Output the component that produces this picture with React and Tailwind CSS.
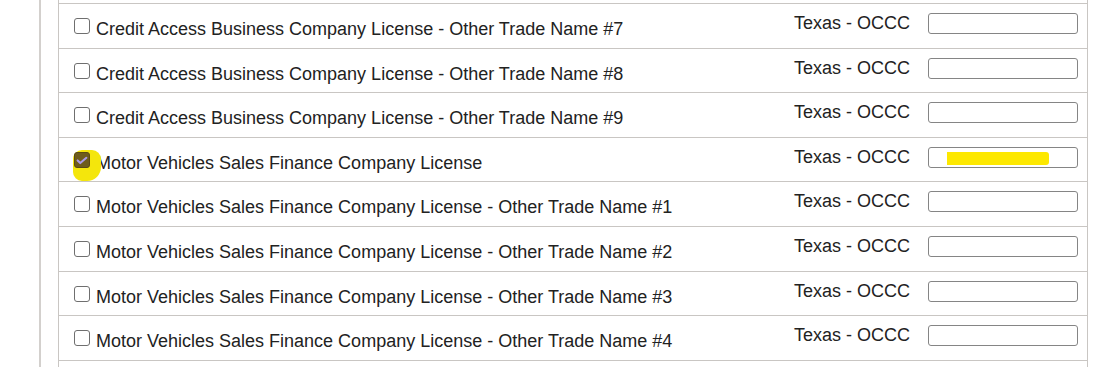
import React from "react";

const rows = [
  { label: "Credit Access Business Company License - Other Trade Name #7" },
  { label: "Credit Access Business Company License - Other Trade Name #8" },
  { label: "Credit Access Business Company License - Other Trade Name #9" },
  { label: "Motor Vehicles Sales Finance Company License", checked: true },
  { label: "Motor Vehicles Sales Finance Company License - Other Trade Name #1" },
  { label: "Motor Vehicles Sales Finance Company License - Other Trade Name #2" },
  { label: "Motor Vehicles Sales Finance Company License - Other Trade Name #3" },
  { label: "Motor Vehicles Sales Finance Company License - Other Trade Name #4" },
];

const Checkbox = ({ checked }) => {
  if (!checked) {
    return (
      <span className="block w-[16px] h-[16px] border border-[#6f6f6f] rounded-[3px] bg-white shrink-0" />
    );
  }
  return (
    <span className="relative block w-[16px] h-[16px] shrink-0">
      {/* marker highlight drawn over the box */}
      <span className="absolute left-[-1px] top-[-2px] w-[28px] h-[31px] bg-[#f4e60c] rounded-[9px] rounded-br-[14px]" />
      <span className="absolute left-0 top-0 w-[16px] h-[16px] rounded-[3px] bg-[#6e5c1c] border border-[#5a4a14]">
        <svg viewBox="0 0 16 16" className="w-full h-full">
          <path
            d="M3 8.5l3 3 7-6"
            fill="none"
            stroke="#a99ae6"
            strokeWidth="2.4"
            strokeLinecap="round"
            strokeLinejoin="round"
          />
        </svg>
      </span>
    </span>
  );
};

const Row = ({ label, checked }) => (
  <div className="flex box-border h-[44.6px] border-b border-[#c9c6c3]">
    <div className="flex items-start pl-[15px] pt-[14px]">
      <Checkbox checked={checked} />
      <span className="ml-[6px] mt-[1px] leading-[20px] whitespace-nowrap">
        {label}
      </span>
    </div>
    <div className="ml-auto flex items-start pt-[9px] pr-[9px]">
      <span className="leading-[20px] whitespace-nowrap">Texas - OCCC</span>
      <div className="ml-[18px] w-[150px] h-[21px] border border-[#858585] rounded-[3px] bg-white pl-[18px] pt-[4px]">
        {checked && (
          <span className="block w-[102px] h-[13px] bg-[#fde800] rounded-r-[3px]" />
        )}
      </div>
    </div>
  </div>
);

export default function App() {
  return (
    <div
      className="w-[1108px] h-[367px] bg-white overflow-hidden flex text-[#222222] text-[18px]"
      style={{ fontFamily: '"Liberation Sans", Arial, sans-serif' }}
    >
      <div className="ml-[39px] w-[2px] h-full bg-[#d3d0cd]" />
      <div className="ml-[17px] w-[1030px] h-full border-x border-[#c9c6c3]">
        <div className="mt-[3px] border-t border-[#c9c6c3]">
          {rows.map((r) => (
            <Row key={r.label} {...r} />
          ))}
        </div>
      </div>
    </div>
  );
}
